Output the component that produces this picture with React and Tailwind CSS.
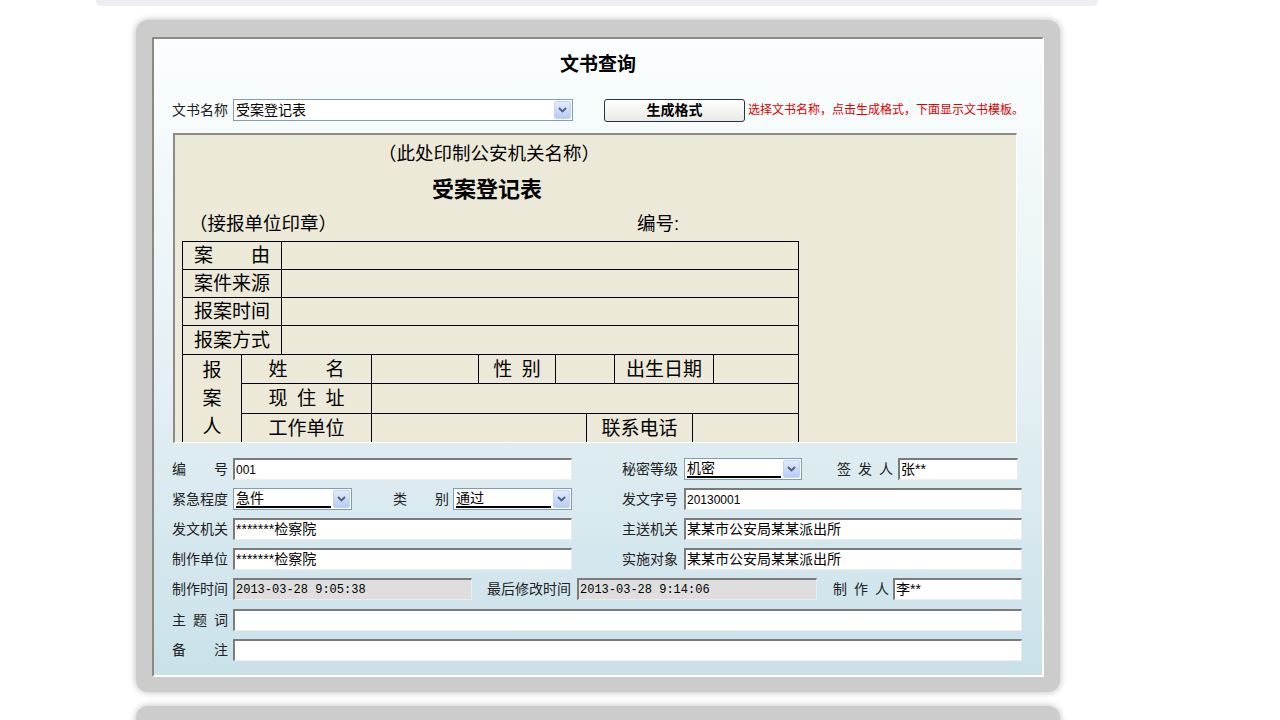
import React from 'react';

const Arrow = () => (
  <div className="w-[17px] h-[18px] mr-[1px] flex items-center justify-center rounded-[2px] border border-[#c3d3f3] bg-gradient-to-b from-[#e3ebfc] to-[#b7cbf2]">
    <svg width="9" height="6" viewBox="0 0 9 6">
      <polyline points="1,1 4.5,4.5 8,1" fill="none" stroke="#4b5e83" strokeWidth="1.8" />
    </svg>
  </div>
);

const Select = ({ w, value, underline }) => (
  <div className={`h-[22px] flex items-center border border-[#7f9db9] bg-white ${w}`}>
    <div className="flex-1 min-w-0 h-full flex items-center px-[2px]">
      {underline ? (
        <span className="w-full border-b-2 border-black leading-[16px] text-[14px] text-black">{value}</span>
      ) : (
        <span className="text-[14px] text-black">{value}</span>
      )}
    </div>
    <Arrow />
  </div>
);

const Input = ({ w, value, gray, mono, small }) => (
  <div
    className={`h-[22px] flex items-center pl-[1px] border-t-2 border-l-2 border-t-[#7b7b7b] border-l-[#7b7b7b] border-b border-r border-b-[#ececec] border-r-[#ececec] text-black whitespace-nowrap overflow-hidden ${
      gray ? 'bg-[#dedede]' : 'bg-white'
    } ${mono ? "font-['Liberation_Mono',monospace] text-[12px]" : small ? 'text-[12px]' : 'text-[14px]'} ${w}`}
  >
    {value}
  </div>
);

const Label = ({ w, className = '', children }) => (
  <div className={`text-[14px] text-[#222] whitespace-nowrap ${w} ${className}`}>{children}</div>
);

const Cell = ({ colSpan, rowSpan, children, className = '' }) => (
  <td colSpan={colSpan} rowSpan={rowSpan} className={`border border-black p-0 text-center align-middle ${className}`}>
    {children}
  </td>
);

const widths = [59, 40, 90, 107, 77, 31, 28, 78, 21, 85];

const Card = ({ className = '', children }) => (
  <div className={`ml-[40px] w-[924px] rounded-[12px] bg-[#cccccc] shadow-[0_0_7px_rgba(0,0,0,0.28)] ${className}`}>
    {children}
  </div>
);

export default function App() {
  return (
    <div className="w-[1280px] h-[720px] overflow-hidden bg-white font-['Liberation_Sans','Noto_Sans_CJK_SC',sans-serif]">
      <div className="ml-[96px] w-[1002px]">
        <div className="h-[6px] bg-[#eceef2] rounded-b-[5px]" />

        <Card className="mt-[14px] h-[672px] pt-[17px] pl-[16px]">
          {/* inner panel */}
          <div className="w-[892px] h-[640px] border-t-2 border-l-2 border-t-[#8a8a80] border-l-[#8a8a80] border-b-2 border-r-2 border-b-white border-r-white bg-gradient-to-b from-[#fbfefe] via-[#e6f1f4] to-[#cae1ea]">
            <div className="pt-[14px] h-[38px] text-center text-[19px] leading-[24px] font-bold text-black">文书查询</div>

            {/* doc name row */}
            <div className="mt-[21px] ml-[18px] flex items-center h-[24px]">
              <Label w="w-[56px]">文书名称</Label>
              <Select w="ml-[5px] w-[340px]" value="受案登记表" />
              <button className="ml-[31px] w-[141px] h-[23px] rounded-[3px] border border-[#1f3550] bg-gradient-to-b from-white to-[#e9e9e4] text-[14px] font-bold text-black">
                生成格式
              </button>
              <div className="ml-[3px] text-[12px] text-[#e00000] whitespace-nowrap">选择文书名称，点击生成格式，下面显示文书模板。</div>
            </div>

            {/* template */}
            <div className="mt-[11px] ml-[19px] w-[844px] h-[310px] overflow-hidden bg-[#ece9d8] border-t-2 border-l-2 border-t-[#8c8c84] border-l-[#8c8c84] border-r border-b border-r-white border-b-white text-black">
              <div className="mt-[8px] ml-[203px] text-[18.5px] leading-[22px] whitespace-nowrap">（此处印制公安机关名称）</div>
              <div className="mt-[11px] ml-[257px] text-[22px] leading-[28px] font-bold whitespace-nowrap">受案登记表</div>
              <div className="mt-[8px] flex text-[18.5px] leading-[24px] whitespace-nowrap">
                <div className="ml-[14px] w-[448px]">（接报单位印章）</div>
                <div>编号:</div>
              </div>
              <table className="mt-[5px] ml-[7px] border-collapse table-fixed w-[616px] text-[19px] leading-none">
                <colgroup>
                  {widths.map((cw, i) => (
                    <col key={i} style={{ width: cw }} />
                  ))}
                </colgroup>
                <tbody>
                  <tr className="h-[28px]">
                    <Cell colSpan={2}>案　　由</Cell>
                    <Cell colSpan={8} />
                  </tr>
                  <tr className="h-[28px]">
                    <Cell colSpan={2}>案件来源</Cell>
                    <Cell colSpan={8} />
                  </tr>
                  <tr className="h-[28px]">
                    <Cell colSpan={2}>报案时间</Cell>
                    <Cell colSpan={8} />
                  </tr>
                  <tr className="h-[29px]">
                    <Cell colSpan={2}>报案方式</Cell>
                    <Cell colSpan={8} />
                  </tr>
                  <tr className="h-[29px]">
                    <Cell rowSpan={3}>
                      <div className="flex flex-col items-center gap-[9px]">
                        <span>报</span>
                        <span>案</span>
                        <span>人</span>
                      </div>
                    </Cell>
                    <Cell colSpan={2}>姓　　名</Cell>
                    <Cell />
                    <Cell>性&#8194;别</Cell>
                    <Cell colSpan={2} />
                    <Cell colSpan={2}>出生日期</Cell>
                    <Cell />
                  </tr>
                  <tr className="h-[30px]">
                    <Cell colSpan={2}>现&#8194;住&#8194;址</Cell>
                    <Cell colSpan={7} />
                  </tr>
                  <tr className="h-[29px]">
                    <Cell colSpan={2}>工作单位</Cell>
                    <Cell colSpan={3} />
                    <Cell colSpan={2}>联系电话</Cell>
                    <Cell colSpan={2} />
                  </tr>
                </tbody>
              </table>
            </div>

            {/* form fields */}
            <div className="mt-[15px] ml-[18px] flex flex-col gap-[8px]">
              <div className="flex items-center">
                <Label w="w-[56px]">编　　号</Label>
                <Input w="ml-[5px] w-[339px]" value="001" small />
                <Label w="ml-[50px] w-[56px]">秘密等级</Label>
                <Select w="ml-[6px] w-[118px]" value="机密" underline />
                <Label w="ml-[35px] w-[58px]">签&#8194;发&#8194;人</Label>
                <Input w="ml-[3px] w-[120px]" value="张**" />
              </div>
              <div className="flex items-center">
                <Label w="w-[56px]">紧急程度</Label>
                <Select w="ml-[5px] w-[119px]" value="急件" underline />
                <Label w="ml-[41px] w-[56px]">类　　别</Label>
                <Select w="ml-[4px] w-[119px]" value="通过" underline />
                <Label w="ml-[50px] w-[56px]">发文字号</Label>
                <Input w="ml-[6px] w-[338px]" value="20130001" small />
              </div>
              <div className="flex items-center">
                <Label w="w-[56px]">发文机关</Label>
                <Input w="ml-[5px] w-[339px]" value="*******检察院" />
                <Label w="ml-[50px] w-[56px]">主送机关</Label>
                <Input w="ml-[6px] w-[338px]" value="某某市公安局某某派出所" />
              </div>
              <div className="flex items-center">
                <Label w="w-[56px]">制作单位</Label>
                <Input w="ml-[5px] w-[339px]" value="*******检察院" />
                <Label w="ml-[50px] w-[56px]">实施对象</Label>
                <Input w="ml-[6px] w-[338px]" value="某某市公安局某某派出所" />
              </div>
              <div className="flex items-center">
                <Label w="w-[56px]">制作时间</Label>
                <Input w="ml-[5px] w-[239px]" value="2013-03-28 9:05:38" gray mono />
                <Label w="ml-[15px] w-[85px]">最后修改时间</Label>
                <Input w="ml-[5px] w-[240px]" value="2013-03-28 9:14:06" gray mono />
                <Label w="ml-[16px] w-[58px]">制&#8194;作&#8194;人</Label>
                <Input w="ml-[2px] w-[129px]" value="李**" />
              </div>
              <div className="flex items-center mt-[1px]">
                <Label w="w-[56px]">主&#8194;题&#8194;词</Label>
                <Input w="ml-[5px] w-[789px]" value="" />
              </div>
              <div className="flex items-center">
                <Label w="w-[56px]">备　　注</Label>
                <Input w="ml-[5px] w-[789px]" value="" />
              </div>
            </div>
          </div>
        </Card>

        <Card className="mt-[14px] h-[200px]" />
      </div>
    </div>
  );
}
